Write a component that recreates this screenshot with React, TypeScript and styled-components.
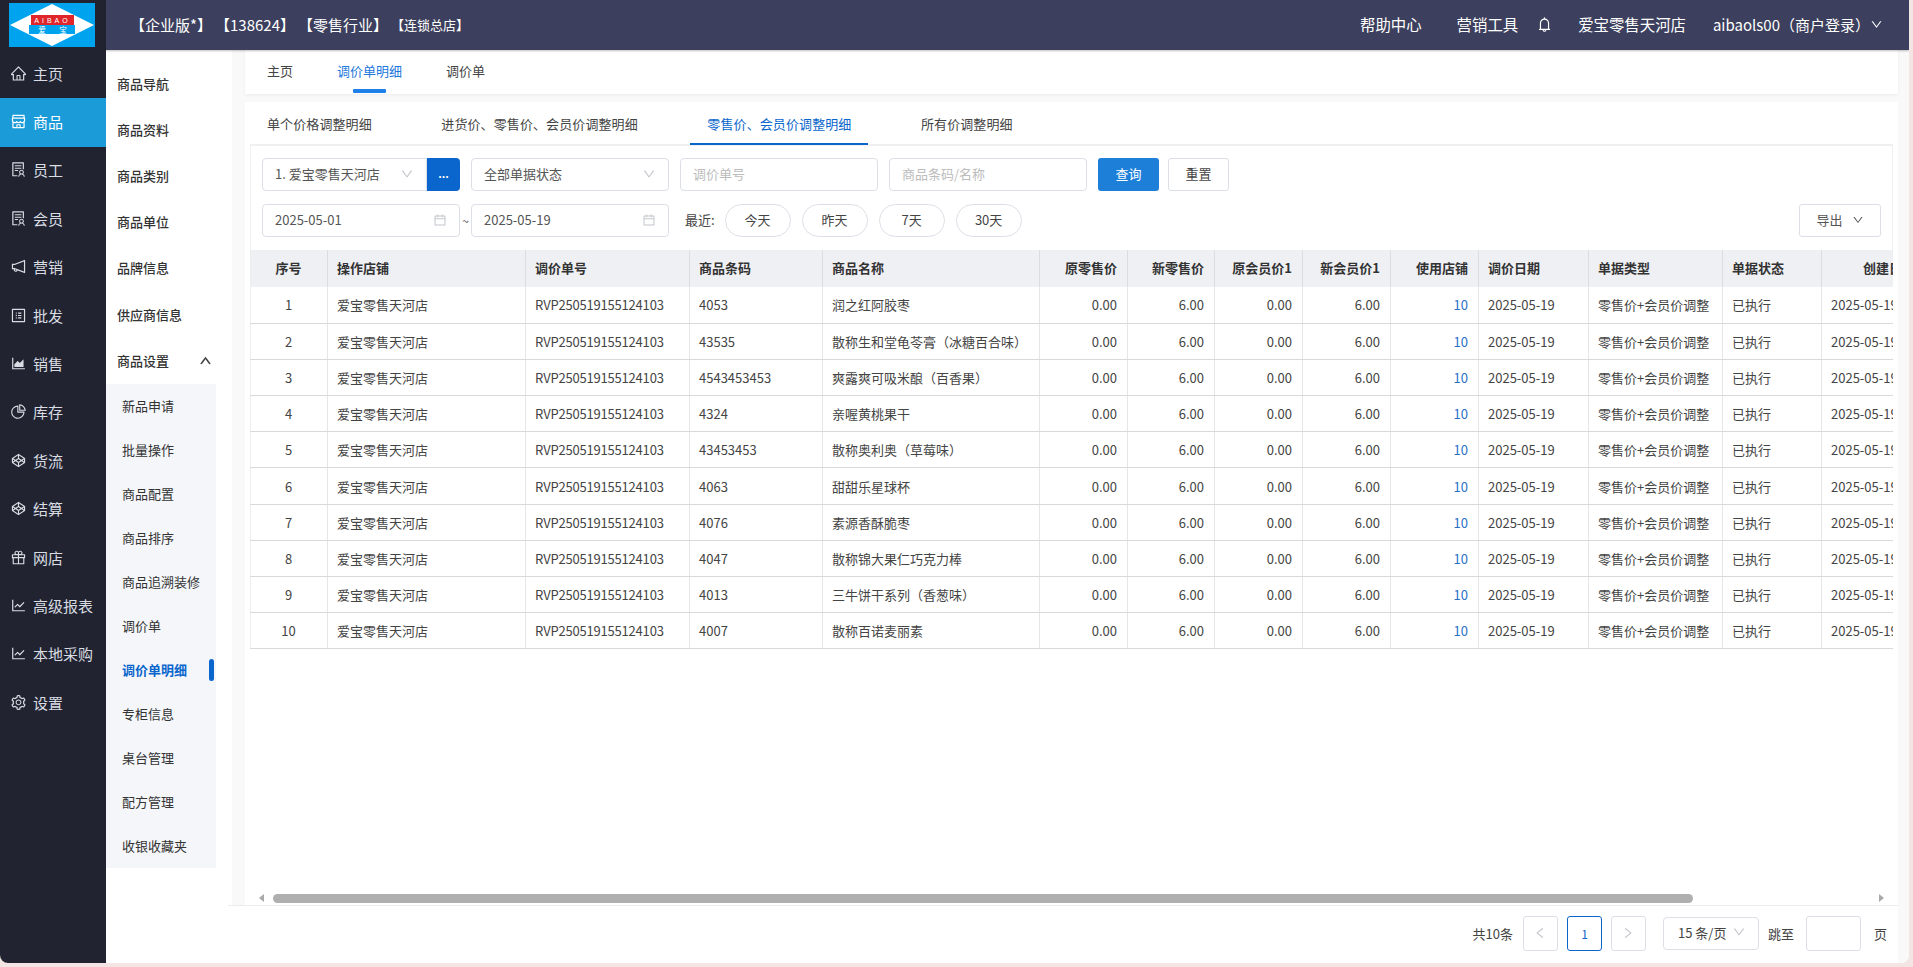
import React from 'react';
import styled, { createGlobalStyle } from 'styled-components';
import {
    AiOutlineHome, AiOutlineShop, AiOutlineSolution, AiOutlineNotification, AiOutlineProfile,
    AiOutlineAreaChart, AiOutlinePieChart, AiOutlineCodepen, AiOutlineGift, AiOutlineLineChart,
    AiOutlineSetting, AiOutlineBell, AiOutlineDown, AiOutlineUp, AiOutlineCalendar, AiOutlineLeft, AiOutlineRight
} from 'react-icons/ai';

const GlobalStyle = createGlobalStyle`
    html, body {
        margin: 0;
        height: 100%;
        overflow: hidden;
        background: #f3e5e3;
    }
    body, input, button {
        font-family: "Noto Sans CJK SC", "Liberation Sans", sans-serif;
    }
    * { box-sizing: border-box; }
`
const Window = styled.div`
    width: 1909px;
    height: 963px;
    display: flex;
    overflow: hidden;
    border-radius: 0 0 8px 8px;
    background: #fff;
`
const Rail = styled.aside`
    width: 106px;
    flex-shrink: 0;
    background: #212430;
`
const LogoBox = styled.div`
    height: 50px;
    padding: 3px 0 3px 9px;
    svg { display: block; }
`
const RailItem = styled.div<{ $active?: boolean }>`
    height: 48.4px;
    display: flex;
    align-items: center;
    gap: 6px;
    padding: 0 0 2px 10px;
    font-size: 15px;
    color: ${(props) => (props.$active ? '#fff' : '#d9dce3')};
    background: ${(props) => (props.$active ? '#1b9bd7' : 'transparent')};
    svg { font-size: 17px; flex-shrink: 0; }
`
const Right = styled.div`
    flex: 1;
    min-width: 0;
    display: flex;
    flex-direction: column;
`
const Topbar = styled.header`
    height: 50px;
    flex-shrink: 0;
    display: flex;
    align-items: center;
    padding: 0 26px 2px 24px;
    background: #3c3f5d;
    color: #fff;
    box-shadow: 0 1px 2px rgba(0,0,0,0.25);
    position: relative;
`
const Edition = styled.span<{ $small?: boolean }>`
    font-size: ${(props) => (props.$small ? '13px' : '15px')};
    margin-right: 3px;
`
const TopLinks = styled.div`
    margin-left: auto;
    display: flex;
    align-items: center;
    font-size: 15.4px;
    svg { display: block; }
`
const TopLink = styled.span<{ $left?: number }>`
    margin-left: ${(props) => props.$left || 0}px;
    display: flex;
    align-items: center;
`
const UserLink = styled(TopLink)`
    font-size: 15px;
`
const Body = styled.div`
    flex: 1;
    min-height: 0;
    display: flex;
`
const SideMenu = styled.nav`
    width: 126px;
    flex-shrink: 0;
    padding-top: 11px;
`
const SideItem = styled.div`
    height: 46.2px;
    display: flex;
    align-items: center;
    justify-content: space-between;
    padding: 0 20px 2px 11px;
    font-size: 13px;
    font-weight: 500;
    color: #333;
`
const SubMenu = styled.div`
    width: 110px;
    background: #f4f6fa;
`
const SubItem = styled.div<{ $active?: boolean }>`
    height: 44px;
    display: flex;
    align-items: center;
    padding: 0 0 2px 16px;
    position: relative;
    font-size: 13px;
    font-weight: ${(props) => (props.$active ? 700 : 400)};
    color: ${(props) => (props.$active ? '#0a66cc' : '#333')};
    &::after {
        content: '';
        display: ${(props) => (props.$active ? 'block' : 'none')};
        position: absolute;
        right: 2px;
        top: 11px;
        width: 5px;
        height: 22px;
        border-radius: 3px;
        background: #0a66cc;
    }
`
const Main = styled.main`
    flex: 1;
    min-width: 0;
    display: flex;
    flex-direction: column;
    background: #f9f9fa;
    padding-right: 11px;
`
const Workspace = styled.div`
    flex: 1;
    min-height: 0;
    display: flex;
    flex-direction: column;
    gap: 8px;
    padding-left: 13px;
`
const PageTabs = styled.div`
    height: 44px;
    flex-shrink: 0;
    display: flex;
    gap: 44px;
    padding-left: 22px;
    background: #fff;
    box-shadow: 0 1px 3px rgba(0,0,0,0.06);
`
const PageTab = styled.div<{ $active?: boolean }>`
    position: relative;
    display: flex;
    align-items: center;
    height: 42px;
    padding-bottom: 2px;
    font-size: 13px;
    color: ${(props) => (props.$active ? '#1e78dc' : '#444')};
    &::after {
        content: '';
        display: ${(props) => (props.$active ? 'block' : 'none')};
        position: absolute;
        left: 16px;
        right: 16px;
        bottom: -1px;
        height: 4px;
        border-radius: 1px;
        background: #1e80e8;
    }
`
const Panel = styled.section`
    flex: 1;
    min-height: 0;
    display: flex;
    flex-direction: column;
    padding: 0 5px;
    background: #fff;
`
const SubTabs = styled.div`
    height: 44px;
    flex-shrink: 0;
    display: flex;
    gap: 35.5px;
    border-bottom: 2px solid #f0f0f2;
`
const SubTab = styled.div<{ $active?: boolean }>`
    height: 43px;
    display: flex;
    align-items: center;
    padding: 2px 17px 0;
    font-size: 13px;
    letter-spacing: 0.1px;
    color: ${(props) => (props.$active ? '#0a66cc' : '#444')};
    border-bottom: 2px solid ${(props) => (props.$active ? '#0a66cc' : 'transparent')};
`
const Content = styled.div`
    flex: 1;
    min-height: 0;
    display: flex;
    flex-direction: column;
`
const Filters = styled.div`
    flex-shrink: 0;
    display: flex;
    flex-direction: column;
    gap: 13px;
    padding: 12px 11px 13px;
    border-left: 1px solid #f0f0f2;
    border-right: 1px solid #f0f0f2;
`
const FilterRow = styled.div`
    display: flex;
    align-items: center;
    gap: 11px;
`
const Field = styled.div<{ $width: number; $joined?: boolean }>`
    width: ${(props) => props.$width}px;
    height: 33px;
    display: flex;
    align-items: center;
    justify-content: space-between;
    padding: 0 12px 2px;
    font-size: 13px;
    color: #555;
    background: #fff;
    border: 1px solid #dcdfe6;
    border-radius: ${(props) => (props.$joined ? '4px 0 0 4px' : '4px')};
    svg { color: #c4c6cc; font-size: 14px; }
`
const JoinedGroup = styled.div`
    display: flex;
`
const MoreButton = styled.button`
    width: 33px;
    height: 33px;
    padding: 0 0 4px;
    border: none;
    border-radius: 0 4px 4px 0;
    background: #0a66cc;
    color: #fff;
    font-size: 11px;
    font-weight: 700;
`
const TextInput = styled.input`
    width: 198px;
    height: 33px;
    padding: 0 12px 2px;
    font-size: 13px;
    border: 1px solid #dcdfe6;
    border-radius: 4px;
    outline: none;
    &::placeholder { color: #bcbcbc; }
`
const PrimaryButton = styled.button`
    width: 61px;
    height: 33px;
    padding: 0 0 2px;
    border: none;
    border-radius: 3px;
    background: #1e7fd9;
    color: #fff;
    font-size: 13px;
`
const PlainButton = styled.button`
    width: 61px;
    height: 33px;
    margin-left: -2px;
    padding: 0 0 2px;
    border: 1px solid #dcdfe6;
    border-radius: 3px;
    background: #fff;
    color: #444;
    font-size: 13px;
`
const Tilde = styled.span`
    width: 11px;
    margin: 0 -11px;
    text-align: center;
    font-size: 12px;
    color: #555;
`
const RecentLabel = styled.span`
    margin-left: 5px;
    margin-right: -1px;
    padding-bottom: 2px;
    font-size: 13px;
    color: #444;
`
const Pill = styled.button`
    width: 66px;
    height: 33px;
    padding: 0 0 2px;
    border: 1px solid #dcdfe6;
    border-radius: 17px;
    background: #fff;
    color: #444;
    font-size: 13px;
`
const ExportButton = styled.button`
    margin-left: auto;
    width: 82px;
    height: 33px;
    display: flex;
    align-items: center;
    justify-content: center;
    gap: 9px;
    padding: 0 0 2px;
    border: 1px solid #dcdfe6;
    border-radius: 3px;
    background: #fff;
    color: #555;
    font-size: 13px;
    svg { font-size: 12px; }
`
const TableArea = styled.div`
    flex: 1;
    min-height: 0;
    overflow: hidden;
`
const Table = styled.table`
    table-layout: fixed;
    width: 1708px;
    border-collapse: collapse;
    border-left: 1px solid #eeeef0;
    font-size: 13px;
`
const HeadCell = styled.th<{ $width: number; $align: string }>`
    width: ${(props) => props.$width}px;
    height: 37px;
    padding: 0 10px 2px 9px;
    text-align: ${(props) => props.$align};
    font-weight: 700;
    color: #333;
    background: #eff0f4;
    border-right: 1px solid #dcdde1;
`
const Cell = styled.td<{ $align: string; $link?: boolean; $tight?: boolean }>`
    height: 36.2px;
    padding: 0 10px 0 9px;
    white-space: nowrap;
    overflow: hidden;
    text-align: ${(props) => props.$align};
    letter-spacing: ${(props) => (props.$tight ? '-0.2px' : 'normal')};
    color: ${(props) => (props.$link ? '#2a6fc9' : '#444')};
    border-right: 1px solid #e6e6e8;
    border-bottom: 1px solid #d9d9db;
`
const ScrollBar = styled.div`
    height: 14px;
    flex-shrink: 0;
    display: flex;
    align-items: center;
`
const ScrollArrow = styled.div<{ $end?: boolean }>`
    width: 23px;
    display: flex;
    justify-content: center;
    &::before {
        content: '';
        border-style: solid;
        border-color: transparent;
        border-width: 4.5px 5px;
        border-right-width: ${(props) => (props.$end ? 0 : '5px')};
        border-left-width: ${(props) => (props.$end ? '5px' : 0)};
        border-left-color: #aaa;
        border-right-color: #aaa;
    }
`
const ScrollTrack = styled.div`
    flex: 1;
`
const ScrollThumb = styled.div`
    width: 88.9%;
    height: 9px;
    border-radius: 5px;
    background: #afafaf;
`
const Pagination = styled.footer`
    height: 58px;
    flex-shrink: 0;
    margin-left: -4px;
    display: flex;
    align-items: center;
    justify-content: flex-end;
    padding: 0 11px 3px 0;
    background: #fff;
    border-top: 1px solid #ececee;
    font-size: 13px;
    color: #444;
`
const PageButton = styled.button<{ $active?: boolean }>`
    width: 35px;
    height: 35px;
    margin-left: 9px;
    display: flex;
    align-items: center;
    justify-content: center;
    padding: 0;
    border: 1px solid ${(props) => (props.$active ? '#0a66cc' : '#dcdfe6')};
    border-radius: 3px;
    background: #fff;
    color: ${(props) => (props.$active ? '#0a66cc' : '#c4c6cc')};
    font-size: 12px;
    svg { font-size: 14px; }
`
const PageSize = styled.div`
    width: 96px;
    height: 33px;
    margin: 0 9px 0 17px;
    display: flex;
    align-items: center;
    justify-content: space-between;
    padding: 0 12px 2px 14px;
    border: 1px solid #dcdfe6;
    border-radius: 4px;
    svg { color: #c4c6cc; font-size: 14px; }
`
const JumpInput = styled.input`
    width: 55px;
    height: 35px;
    margin: 0 13px 0 12px;
    border: 1px solid #dcdfe6;
    border-radius: 3px;
    outline: none;
`
const TotalText = styled.span`
    margin-right: 1px;
`

const railItems = [
    { label: '主页', icon: <AiOutlineHome /> },
    { label: '商品', icon: <AiOutlineShop />, active: true },
    { label: '员工', icon: <AiOutlineSolution /> },
    { label: '会员', icon: <AiOutlineSolution /> },
    { label: '营销', icon: <AiOutlineNotification /> },
    { label: '批发', icon: <AiOutlineProfile /> },
    { label: '销售', icon: <AiOutlineAreaChart /> },
    { label: '库存', icon: <AiOutlinePieChart /> },
    { label: '货流', icon: <AiOutlineCodepen /> },
    { label: '结算', icon: <AiOutlineCodepen /> },
    { label: '网店', icon: <AiOutlineGift /> },
    { label: '高级报表', icon: <AiOutlineLineChart /> },
    { label: '本地采购', icon: <AiOutlineLineChart /> },
    { label: '设置', icon: <AiOutlineSetting /> },
];
const sideItems = ['商品导航', '商品资料', '商品类别', '商品单位', '品牌信息', '供应商信息'];
const subItems = ['新品申请', '批量操作', '商品配置', '商品排序', '商品追溯装修', '调价单', '调价单明细', '专柜信息', '桌台管理', '配方管理', '收银收藏夹'];

const columns = [
    { title: '序号', width: 77, align: 'center' },
    { title: '操作店铺', width: 198, align: 'left' },
    { title: '调价单号', width: 164, align: 'left' },
    { title: '商品条码', width: 133, align: 'left' },
    { title: '商品名称', width: 217, align: 'left' },
    { title: '原零售价', width: 88, align: 'right' },
    { title: '新零售价', width: 87, align: 'right' },
    { title: '原会员价1', width: 88, align: 'right' },
    { title: '新会员价1', width: 88, align: 'right' },
    { title: '使用店铺', width: 88, align: 'right' },
    { title: '调价日期', width: 110, align: 'left' },
    { title: '单据类型', width: 134, align: 'left' },
    { title: '单据状态', width: 99, align: 'left' },
    { title: '创建日期', width: 136, align: 'center' },
];
const products = [
    ['4053', '润之红阿胶枣'],
    ['43535', '散称生和堂龟苓膏（冰糖百合味）'],
    ['4543453453', '爽露爽可吸米酿（百香果）'],
    ['4324', '亲喔黄桃果干'],
    ['43453453', '散称奥利奥（草莓味）'],
    ['4063', '甜甜乐星球杯'],
    ['4076', '素源香酥脆枣'],
    ['4047', '散称锦大果仁巧克力棒'],
    ['4013', '三牛饼干系列（香葱味）'],
    ['4007', '散称百诺麦丽素'],
];

const Logo: React.FC = () => (
    <svg width="86" height="44" viewBox="0 0 86 44">
        <rect width="86" height="44" fill="#00a3ee" />
        <polygon points="1,22 43,1 85,22 43,43" fill="#fff" />
        <rect x="22" y="12" width="43" height="10" fill="#e0262b" />
        <rect x="20" y="22" width="46" height="9" fill="#00a3ee" />
        <text x="43.5" y="20" textAnchor="middle" fontSize="7" letterSpacing="3" fill="#fff" fontFamily="Liberation Sans">AIBAO</text>
        <text x="33" y="29.5" textAnchor="middle" fontSize="7.5" fill="#fff" fontFamily="Noto Sans CJK SC">爱</text>
        <text x="54" y="29.5" textAnchor="middle" fontSize="7.5" fill="#fff" fontFamily="Noto Sans CJK SC">宝</text>
    </svg>
);

const App: React.FC = () => {
    return (
        <Window>
            <GlobalStyle />
            <Rail>
                <LogoBox><Logo /></LogoBox>
                {railItems.map((item) => (
                    <RailItem key={item.label} $active={item.active}>{item.icon}{item.label}</RailItem>
                ))}
            </Rail>
            <Right>
                <Topbar>
                    <Edition>【企业版*】</Edition>
                    <Edition>【138624】</Edition>
                    <Edition>【零售行业】</Edition>
                    <Edition $small>【连锁总店】</Edition>
                    <TopLinks>
                        <TopLink>帮助中心</TopLink>
                        <TopLink $left={35}>营销工具</TopLink>
                        <TopLink $left={18}><AiOutlineBell size={17} /></TopLink>
                        <TopLink $left={25}>爱宝零售天河店</TopLink>
                        <UserLink $left={27}>aibaols00（商户登录）<AiOutlineDown size={13} /></UserLink>
                    </TopLinks>
                </Topbar>
                <Body>
                    <SideMenu>
                        {sideItems.map((label) => <SideItem key={label}>{label}</SideItem>)}
                        <SideItem>商品设置<AiOutlineUp size={13} strokeWidth={40} /></SideItem>
                        <SubMenu>
                            {subItems.map((label) => (
                                <SubItem key={label} $active={label === '调价单明细'}>{label}</SubItem>
                            ))}
                        </SubMenu>
                    </SideMenu>
                    <Main>
                        <Workspace>
                            <PageTabs>
                                <PageTab>主页</PageTab>
                                <PageTab $active>调价单明细</PageTab>
                                <PageTab>调价单</PageTab>
                            </PageTabs>
                            <Panel>
                                <SubTabs>
                                    <SubTab>单个价格调整明细</SubTab>
                                    <SubTab>进货价、零售价、会员价调整明细</SubTab>
                                    <SubTab $active>零售价、会员价调整明细</SubTab>
                                    <SubTab>所有价调整明细</SubTab>
                                </SubTabs>
                                <Content>
                                    <Filters>
                                        <FilterRow>
                                            <JoinedGroup>
                                                <Field $width={165} $joined>1. 爱宝零售天河店<AiOutlineDown /></Field>
                                                <MoreButton>...</MoreButton>
                                            </JoinedGroup>
                                            <Field $width={198}>全部单据状态<AiOutlineDown /></Field>
                                            <TextInput placeholder="调价单号" />
                                            <TextInput placeholder="商品条码/名称" />
                                            <PrimaryButton>查询</PrimaryButton>
                                            <PlainButton>重置</PlainButton>
                                        </FilterRow>
                                        <FilterRow>
                                            <Field $width={198}>2025-05-01<AiOutlineCalendar /></Field>
                                            <Tilde>~</Tilde>
                                            <Field $width={198}>2025-05-19<AiOutlineCalendar /></Field>
                                            <RecentLabel>最近:</RecentLabel>
                                            <Pill>今天</Pill>
                                            <Pill>昨天</Pill>
                                            <Pill>7天</Pill>
                                            <Pill>30天</Pill>
                                            <ExportButton>导出<AiOutlineDown /></ExportButton>
                                        </FilterRow>
                                    </Filters>
                                    <TableArea>
                                        <Table>
                                            <thead>
                                                <tr>
                                                    {columns.map((col) => (
                                                        <HeadCell key={col.title} $width={col.width} $align={col.align}>{col.title}</HeadCell>
                                                    ))}
                                                </tr>
                                            </thead>
                                            <tbody>
                                                {products.map(([code, name], i) => (
                                                    <tr key={code}>
                                                        <Cell $align="center">{i + 1}</Cell>
                                                        <Cell $align="left">爱宝零售天河店</Cell>
                                                        <Cell $align="left" $tight>RVP250519155124103</Cell>
                                                        <Cell $align="left">{code}</Cell>
                                                        <Cell $align="left">{name}</Cell>
                                                        <Cell $align="right">0.00</Cell>
                                                        <Cell $align="right">6.00</Cell>
                                                        <Cell $align="right">0.00</Cell>
                                                        <Cell $align="right">6.00</Cell>
                                                        <Cell $align="right" $link>10</Cell>
                                                        <Cell $align="left">2025-05-19</Cell>
                                                        <Cell $align="left">零售价+会员价调整</Cell>
                                                        <Cell $align="left">已执行</Cell>
                                                        <Cell $align="left">2025-05-19</Cell>
                                                    </tr>
                                                ))}
                                            </tbody>
                                        </Table>
                                    </TableArea>
                                    <ScrollBar>
                                        <ScrollArrow />
                                        <ScrollTrack><ScrollThumb /></ScrollTrack>
                                        <ScrollArrow $end />
                                    </ScrollBar>
                                </Content>
                            </Panel>
                        </Workspace>
                        <Pagination>
                            <TotalText>共10条</TotalText>
                            <PageButton><AiOutlineLeft /></PageButton>
                            <PageButton $active>1</PageButton>
                            <PageButton><AiOutlineRight /></PageButton>
                            <PageSize>15 条/页<AiOutlineDown /></PageSize>
                            <span>跳至</span>
                            <JumpInput />
                            <span>页</span>
                        </Pagination>
                    </Main>
                </Body>
            </Right>
        </Window>
    );
}

export default App;
